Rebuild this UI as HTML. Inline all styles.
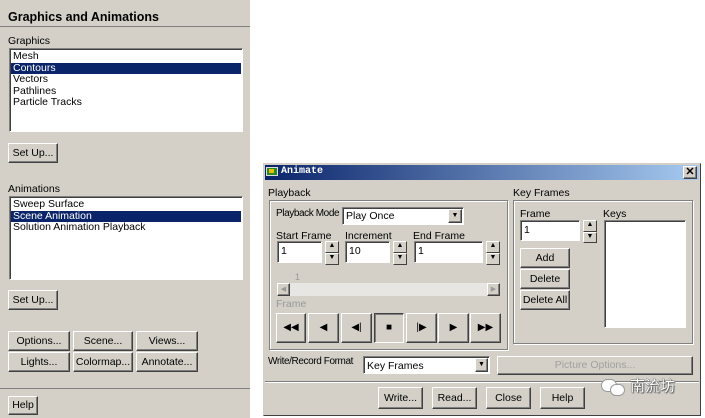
<!DOCTYPE html><html><head><style>
body{margin:0;width:705px;height:418px;background:#fff;position:relative;overflow:hidden;font-family:"Liberation Sans",Tahoma,sans-serif;font-size:10.5px;color:#000}
.a{position:absolute}
.bt{position:absolute;background:#d4d0c8;border:1px solid;border-color:#fff #404040 #404040 #fff;box-shadow:inset -1px -1px 0 #808080;text-align:center;box-sizing:border-box}
.sk{position:absolute;background:#fff;border:1px solid;border-color:#808080 #fff #fff #808080;box-shadow:inset 1px 1px 0 #404040;box-sizing:border-box}
.gb{position:absolute;border:1px solid #808080;box-shadow:1px 1px 0 #fff,inset 1px 1px 0 #fff;box-sizing:border-box}
.sel{background:#0a246a;color:#fff}
.row{height:11.5px;line-height:11.5px;padding-left:2px}
.sp{position:absolute;width:14px}
.sp div{height:50%;box-sizing:border-box;background:#d4d0c8;border:1px solid;border-color:#fff #404040 #404040 #fff;font-size:7px;line-height:8px;text-align:center}
.cn{letter-spacing:-0.4px;font-size:10px}
</style></head><body>
<div class="a" style="left:0;top:0;width:250px;height:418px;background:#d4d0c8"></div>
<div class="a" style="left:8px;top:10px;font-weight:bold;font-size:12.5px">Graphics and Animations</div>
<div class="a" style="left:0;top:26px;width:250px;height:1px;background:#808080"></div>
<div class="a" style="left:8px;top:35px">Graphics</div>
<div class="sk" style="left:9px;top:48px;width:234px;height:84px;padding:2px 1px">
<div class="row">Mesh</div><div class="row sel">Contours</div><div class="row">Vectors</div><div class="row">Pathlines</div><div class="row">Particle Tracks</div></div>
<div class="bt" style="left:8px;top:143px;width:50px;height:20px;line-height:18px">Set Up...</div>
<div class="a" style="left:8px;top:183px">Animations</div>
<div class="sk" style="left:9px;top:196px;width:234px;height:84px;padding:2px 1px">
<div class="row">Sweep Surface</div><div class="row sel">Scene Animation</div><div class="row">Solution Animation Playback</div></div>
<div class="bt" style="left:8px;top:290px;width:50px;height:20px;line-height:18px">Set Up...</div>
<div class="bt" style="left:8px;top:331px;width:62px;height:20px;line-height:18px">Options...</div>
<div class="bt" style="left:73px;top:331px;width:60px;height:20px;line-height:18px">Scene...</div>
<div class="bt" style="left:136px;top:331px;width:62px;height:20px;line-height:18px">Views...</div>
<div class="bt" style="left:8px;top:352px;width:62px;height:20px;line-height:18px">Lights...</div>
<div class="bt" style="left:73px;top:352px;width:60px;height:20px;line-height:18px">Colormap...</div>
<div class="bt" style="left:136px;top:352px;width:62px;height:20px;line-height:18px">Annotate...</div>
<div class="a" style="left:0;top:388px;width:250px;height:1px;background:#808080"></div>
<div class="bt" style="left:8px;top:396px;width:30px;height:19px;line-height:17px">Help</div>

<div class="a" style="left:263px;top:163px;width:438px;height:253px;background:#d4d0c8;border:1px solid;border-color:#d4d0c8 #404040 #404040 #d4d0c8;box-sizing:border-box"></div>
<div class="a" style="left:265px;top:165px;width:434px;height:15px;background:linear-gradient(90deg,#0a246a,#a6caf0)"></div>
<div class="a" style="left:266px;top:167px;width:12px;height:9px;background:#2a8a2a;border:1px solid #ddd;box-sizing:border-box"><div style="margin:1px 2px;width:5px;height:4px;background:#e8c000"></div></div>
<div class="a" style="left:281px;top:166px;color:#fff;font-weight:bold;font-family:'Liberation Mono',monospace;font-size:10px">Animate</div>
<div class="bt" style="left:683px;top:166px;width:14px;height:13px;line-height:11px;font-weight:bold;font-size:11px">✕</div>

<div class="a" style="left:268px;top:187px">Playback</div>
<div class="gb" style="left:269px;top:200px;width:239px;height:150px"></div>
<div class="a cn" style="left:276px;top:208px">Playback Mode</div>
<div class="sk" style="left:342px;top:207px;width:122px;height:18px;padding:2px 3px">Play Once</div>
<div class="bt" style="left:448px;top:209px;width:14px;height:14px;font-size:7px;line-height:12px">▼</div>
<div class="a" style="left:276px;top:230px">Start Frame</div>
<div class="a" style="left:345px;top:230px">Increment</div>
<div class="a" style="left:413px;top:230px">End Frame</div>
<div class="sk" style="left:277px;top:241px;width:45px;height:22px;padding:3px 3px">1</div>
<div class="sp" style="left:325px;top:241px;height:24px"><div>▲</div><div>▼</div></div>
<div class="sk" style="left:345px;top:241px;width:45px;height:22px;padding:3px 3px">10</div>
<div class="sp" style="left:393px;top:241px;height:24px"><div>▲</div><div>▼</div></div>
<div class="sk" style="left:414px;top:241px;width:69px;height:22px;padding:3px 3px">1</div>
<div class="sp" style="left:486px;top:241px;height:24px"><div>▲</div><div>▼</div></div>
<div class="a" style="left:295px;top:272px;color:#999;font-size:9px">1</div>
<div class="a" style="left:277px;top:283px;width:223px;height:13px;background:#e8e6e2"></div>
<div class="bt" style="left:277px;top:283px;width:13px;height:13px;font-size:7px;line-height:11px;color:#999">◀</div>
<div class="bt" style="left:487px;top:283px;width:13px;height:13px;font-size:7px;line-height:11px;color:#999">▶</div>
<div class="a" style="left:276px;top:298px;color:#999">Frame</div>
<div class="bt" style="left:276px;top:313px;width:30px;height:30px;line-height:28px;font-size:10px">◀◀</div>
<div class="bt" style="left:308px;top:313px;width:31px;height:30px;line-height:28px;font-size:10px">◀</div>
<div class="bt" style="left:341px;top:313px;width:31px;height:30px;line-height:28px;font-size:10px">◀|</div>
<div class="bt" style="left:374px;top:313px;width:30px;height:30px;line-height:28px;font-size:10px;border-color:#404040 #fff #fff #404040;box-shadow:inset 1px 1px 0 #808080">■</div>
<div class="bt" style="left:406px;top:313px;width:31px;height:30px;line-height:28px;font-size:10px">|▶</div>
<div class="bt" style="left:438px;top:313px;width:31px;height:30px;line-height:28px;font-size:10px">▶</div>
<div class="bt" style="left:470px;top:313px;width:31px;height:30px;line-height:28px;font-size:10px">▶▶</div>

<div class="a" style="left:513px;top:187px">Key Frames</div>
<div class="gb" style="left:513px;top:200px;width:180px;height:144px"></div>
<div class="a" style="left:520px;top:208px">Frame</div>
<div class="a" style="left:603px;top:208px">Keys</div>
<div class="sk" style="left:520px;top:220px;width:60px;height:21px;padding:3px 3px">1</div>
<div class="sp" style="left:583px;top:220px;height:23px"><div>▲</div><div>▼</div></div>
<div class="sk" style="left:604px;top:220px;width:82px;height:108px"></div>
<div class="bt" style="left:520px;top:248px;width:50px;height:20px;line-height:18px">Add</div>
<div class="bt" style="left:520px;top:269px;width:50px;height:20px;line-height:18px">Delete</div>
<div class="bt" style="left:520px;top:290px;width:50px;height:20px;line-height:18px">Delete All</div>

<div class="a cn" style="left:268px;top:356px">Write/Record Format</div>
<div class="sk" style="left:363px;top:356px;width:127px;height:18px;padding:3px 3px">Key Frames</div>
<div class="bt" style="left:475px;top:358px;width:13px;height:14px;font-size:7px;line-height:12px">▼</div>
<div class="bt" style="left:497px;top:356px;width:196px;height:19px;line-height:17px;color:#a0a0a0">Picture Options...</div>
<div class="a" style="left:265px;top:381px;width:434px;height:1px;background:#808080;box-shadow:0 1px 0 #fff"></div>
<div class="bt" style="left:378px;top:387px;width:45px;height:22px;line-height:20px">Write...</div>
<div class="bt" style="left:432px;top:387px;width:45px;height:22px;line-height:20px">Read...</div>
<div class="bt" style="left:486px;top:387px;width:45px;height:22px;line-height:20px">Close</div>
<div class="bt" style="left:540px;top:387px;width:45px;height:22px;line-height:20px">Help</div>
<div class="a" style="left:601px;top:379px;width:14px;height:11px;border-radius:7px;background:#fff;border:1px solid #999"></div>
<div class="a" style="left:610px;top:384px;width:13px;height:10px;border-radius:6px;background:#fff;border:1px solid #999"></div>
<div class="a" style="left:630px;top:375px;font-family:'Liberation Sans','Noto Sans CJK SC',sans-serif;font-size:15px;color:#fff;text-shadow:0 0 1px #444,0 0 1px #444,1px 1px 1px #666"> 南流坊</div>
</body></html>
